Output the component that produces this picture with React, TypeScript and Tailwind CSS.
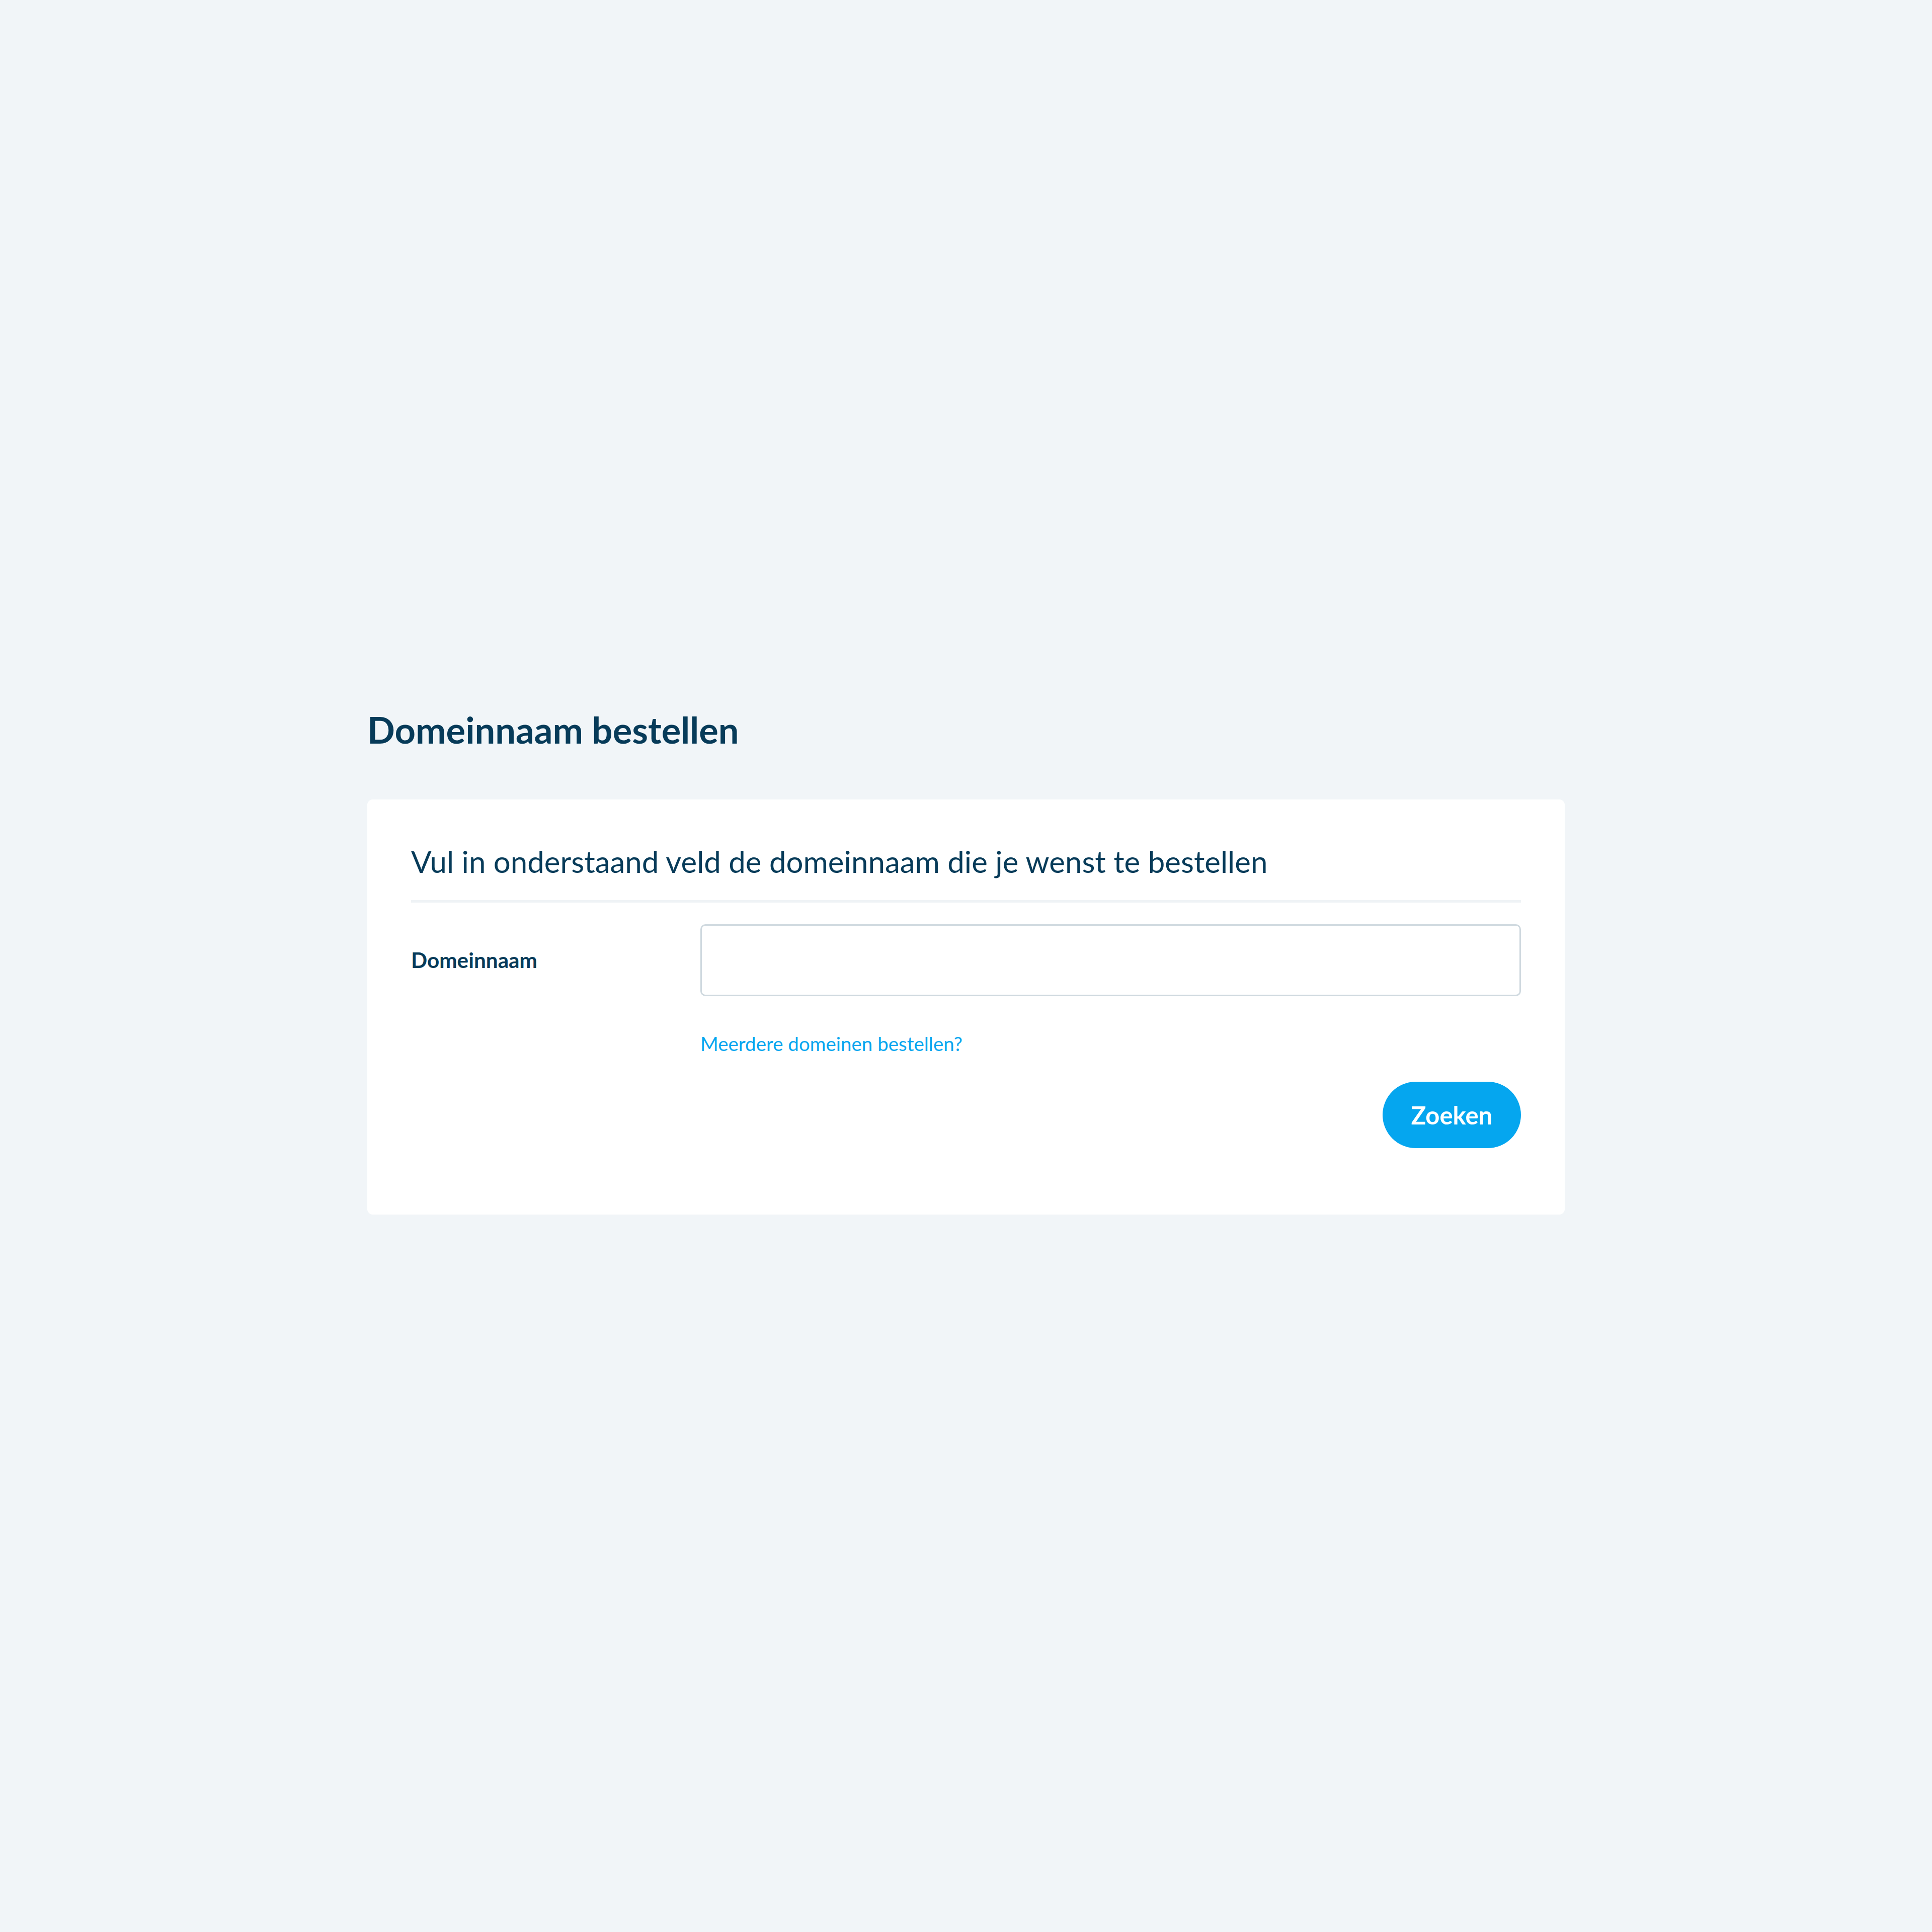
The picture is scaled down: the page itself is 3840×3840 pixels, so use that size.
export default function App() {
  return (
    <div
      className="min-h-screen bg-[#f1f5f8] pt-[1406px] text-[#073b59]"
      style={{ fontFamily: "Lato, 'Noto Sans', sans-serif" }}
    >
      <div className="mx-auto w-[2380px]">
        <h1 className="text-[72.3px] font-bold leading-[88px] mb-[95px]">Domeinnaam bestellen</h1>

        <div className="bg-white rounded-[11px] px-[87px] pt-[88px] pb-[132px]">
          <div className="border-b-[5px] border-[#eff3f6] pb-[41px] text-[60px] leading-[71px]">
            Vul in onderstaand veld de domeinnaam die je wenst te bestellen
          </div>

          <div className="mt-[43px] grid grid-cols-[575px_1fr] items-center">
            <label htmlFor="domain" className="text-[42.3px] font-bold leading-[1.2]">
              Domeinnaam
            </label>
            <input
              id="domain"
              type="text"
              className="h-[143px] w-full rounded-[10px] border-[3px] border-[#cfd9df] bg-white px-[30px] text-[40px] outline-none"
            />
          </div>

          <div className="mt-[71px] grid grid-cols-[575px_1fr]">
            <div />
            <a href="#" className="text-[38.5px] leading-[47px] text-[#07a6ef]">
              Meerdere domeinen bestellen?
            </a>
          </div>

          <div className="mt-[52px] flex justify-end">
            <button
              type="button"
              className="flex h-[132px] w-[275px] items-center justify-center rounded-full bg-[#05a6ef] text-[49px] font-bold leading-[1.2] text-white"
            >
              Zoeken
            </button>
          </div>
        </div>
      </div>
    </div>
  );
}
